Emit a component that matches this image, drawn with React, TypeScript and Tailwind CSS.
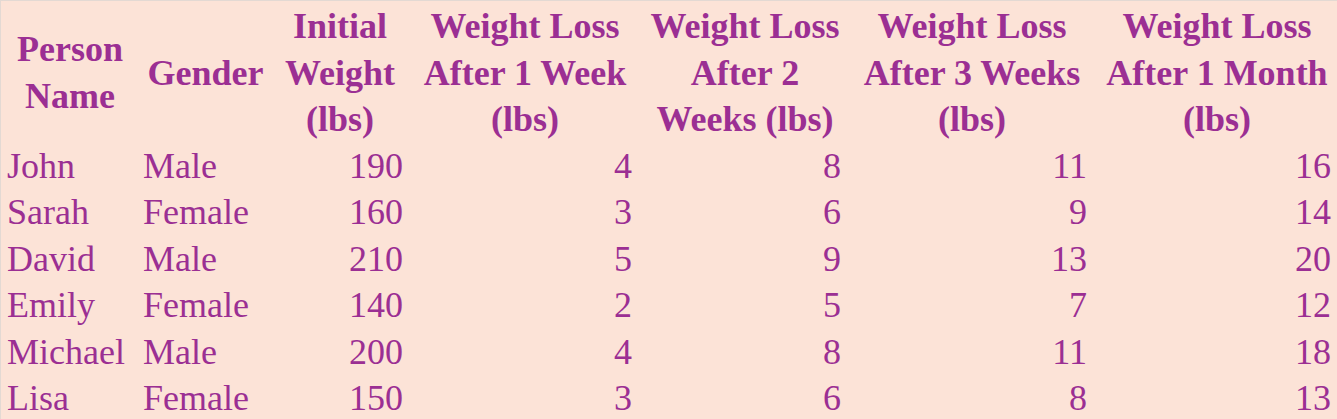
const rows = [
  { name: "John", gender: "Male", initial: 190, w1: 4, w2: 8, w3: 11, m1: 16 },
  { name: "Sarah", gender: "Female", initial: 160, w1: 3, w2: 6, w3: 9, m1: 14 },
  { name: "David", gender: "Male", initial: 210, w1: 5, w2: 9, w3: 13, m1: 20 },
  { name: "Emily", gender: "Female", initial: 140, w1: 2, w2: 5, w3: 7, m1: 12 },
  { name: "Michael", gender: "Male", initial: 200, w1: 4, w2: 8, w3: 11, m1: 18 },
  { name: "Lisa", gender: "Female", initial: 150, w1: 3, w2: 6, w3: 8, m1: 13 },
];

const headers = [
  ["Person", "Name"],
  ["Gender"],
  ["Initial", "Weight", "(lbs)"],
  ["Weight Loss", "After 1 Week", "(lbs)"],
  ["Weight Loss", "After 2", "Weeks (lbs)"],
  ["Weight Loss", "After 3 Weeks", "(lbs)"],
  ["Weight Loss", "After 1 Month", "(lbs)"],
];

export default function App() {
  return (
    <div className="w-[1337px] h-[419px] overflow-hidden bg-[#fce3d7] border-t border-l border-[#e3d9d3] pt-[2px] font-['Liberation_Serif',serif] text-[#9b2f93] text-[36px] leading-[46.5px]">
      <table className="w-[1337px] table-fixed border-collapse">
        <colgroup>
          <col className="w-[138px]" />
          <col className="w-[133px]" />
          <col className="w-[136px]" />
          <col className="w-[234px]" />
          <col className="w-[206px]" />
          <col className="w-[248px]" />
          <col className="w-[242px]" />
        </colgroup>
        <thead>
          <tr className="h-[139px]">
            {headers.map((lines, i) => (
              <th key={i} className="p-0 text-center align-middle font-bold whitespace-nowrap">
                {lines.map((l, j) => (
                  <div key={j}>{l}</div>
                ))}
              </th>
            ))}
          </tr>
        </thead>
        <tbody>
          {rows.map((r) => (
            <tr key={r.name} className="h-[46.5px]">
              <td className="p-0 pl-[6px] text-left">{r.name}</td>
              <td className="p-0 pl-[4px] text-left">{r.gender}</td>
              <td className="p-0 pr-[5px] text-right">{r.initial}</td>
              <td className="p-0 pr-[10px] text-right">{r.w1}</td>
              <td className="p-0 pr-[7px] text-right">{r.w2}</td>
              <td className="p-0 pr-[9px] text-right">{r.w3}</td>
              <td className="p-0 pr-[7px] text-right">{r.m1}</td>
            </tr>
          ))}
        </tbody>
      </table>
    </div>
  );
}
